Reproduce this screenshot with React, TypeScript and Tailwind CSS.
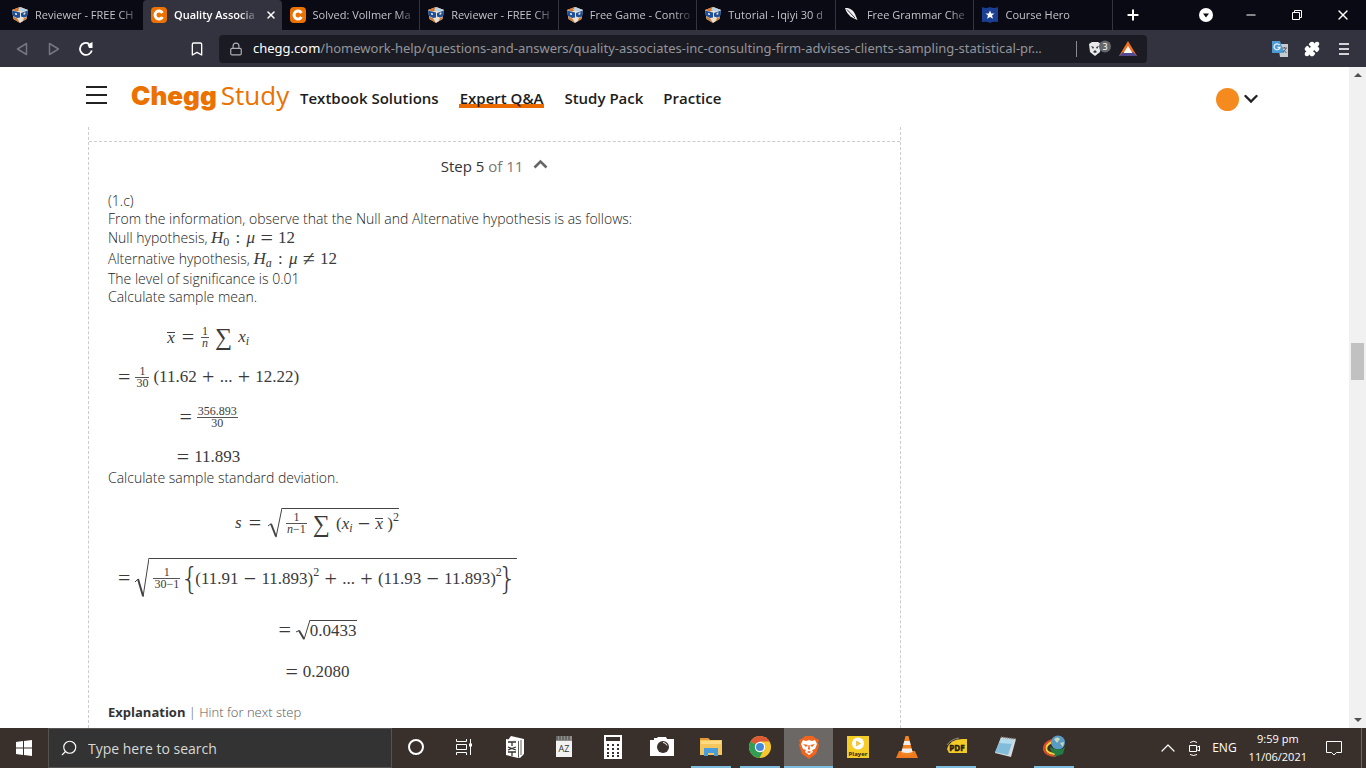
import type { ReactNode } from 'react';
import { Bookmark, ChevronUp, Lock, Minus, Plus, Puzzle, Search, X } from 'lucide-react';
import { clsx } from 'clsx';

interface TabInfo {
  title: string;
  icon: 'cube' | 'chegg' | 'feather' | 'hero';
  active?: boolean;
}

const TABS: TabInfo[] = [
  { title: 'Reviewer - FREE CH', icon: 'cube' },
  { title: 'Quality Associa', icon: 'chegg', active: true },
  { title: 'Solved: Vollmer Ma', icon: 'chegg' },
  { title: 'Reviewer - FREE CH', icon: 'cube' },
  { title: 'Free Game - Contro', icon: 'cube' },
  { title: 'Tutorial - Iqiyi 30 d', icon: 'cube' },
  { title: 'Free Grammar Che', icon: 'feather' },
  { title: 'Course Hero', icon: 'hero' },
];

const NAV_LINKS = ['Textbook Solutions', 'Expert Q&A', 'Study Pack', 'Practice'];

/* ---------- Tab icons ---------- */

const CubeIcon = () => (
  <svg viewBox="0 0 16 16" className="size-4">
    <path d="M0 3 8 0l8 3-1.500 9L8 16l-6.500-4z" fill="#e8e2d6" />
    <path d="M0 3 8 0l4 1.500L5 4.500z" fill="#d9772b" />
    <path d="M8 0l8 3-5 1.500-5-1.500z" fill="#b9d3e6" />
    <path d="M0 3.500l8 2v5l-3 .5-4-2z" fill="#1d4f9c" />
    <path d="M3 6l2 .5v1.500l-2-.5z" fill="#f3f3f3" />
    <path d="M9 6 16 3.500l-1 6-3 1-3-1z" fill="#20509a" />
    <path d="M11.500 6l2-.7-.3 2-1.500.7z" fill="#f4ead9" />
    <path d="M1.200 9.500l4 2L8 16l-6.500-4zM12 11l3-1-.5 2-4 2.500z" fill="#cf7a2e" />
  </svg>
);

const CheggIcon = () => (
  <span className="flex size-4 items-center justify-center rounded-sm bg-[#eb7100]">
    <svg viewBox="0 0 16 16" className="size-4" fill="none" stroke="#fff" strokeWidth="3">
      <path d="M11.500 6A4 4 0 1 0 11.500 10" />
    </svg>
  </span>
);

const FeatherIcon = () => (
  <svg viewBox="0 0 16 16" className="size-4">
    <path d="M1 1c5-.5 8 2 10 6l2.500 6L9 11C5 9 2 5 1 1z" fill="#f1f1f1" />
    <path d="M3 2.500l8 8.500" stroke="#0b0b16" strokeWidth=".8" fill="none" />
  </svg>
);

const HeroIcon = () => (
  <svg viewBox="0 0 16 16" className="size-4">
    <path d="M0 0q4 2 8 0 4 2 8 0v15q-5-1-8 1-3-2-8-1z" fill="#1b3f92" />
    <path d="M8 3.500l1.300 3h3.200L10 8.600l1 3.200-3-1.900-3 1.900 1-3.200-2.500-2.100h3.200z" fill="#fff" />
  </svg>
);

const TAB_ICONS: Record<TabInfo['icon'], () => ReactNode> = {
  cube: CubeIcon,
  chegg: CheggIcon,
  feather: FeatherIcon,
  hero: HeroIcon,
};

const Tab = ({ title, icon, active }: TabInfo) => {
  const Icon = TAB_ICONS[icon];
  return (
    <div
      className={clsx(
        'flex h-full min-w-0 flex-1 items-center gap-[7px] border-r pl-2 first:w-[143px] first:flex-none first:border-r-0 first:pl-3',
        active ? 'rounded-t border-[#32333f] bg-[#32333f] font-semibold text-white' : 'border-[#34343c] text-[#c3c3c9]'
      )}
    >
      <span className="shrink-0">
        <Icon />
      </span>
      <span className="min-w-0 flex-1 whitespace-nowrap [mask-image:linear-gradient(to_right,black_78%,transparent)]">
        {title}
      </span>
      {active && (
        <button type="button" aria-label="Close tab" className="mr-1">
          <X className="size-3" strokeWidth={3} />
        </button>
      )}
    </div>
  );
};

const TabStrip = () => (
  <div className="flex h-[30px] shrink-0 items-center bg-[#0a0a15] text-[11px] text-white">
    <div className="flex h-full min-w-0 max-w-[1113px] flex-1">
      {TABS.map((tab, i) => (
        <Tab key={i} {...tab} />
      ))}
    </div>
    <button type="button" aria-label="New tab" className="ml-3">
      <Plus className="size-4" strokeWidth={3} />
    </button>
    <div className="ml-auto flex items-center">
      <button type="button" aria-label="Search tabs" className="w-11">
        <svg viewBox="0 0 14 14" className="mx-auto size-3.5">
          <circle cx="7" cy="7" r="7" fill="#fff" />
          <path d="M4 5.500h6L7 9.500z" fill="#0a0a15" />
        </svg>
      </button>
      <button type="button" aria-label="Minimize" className="w-[46px]">
        <Minus className="mx-auto size-3.5" strokeWidth={2} />
      </button>
      <button type="button" aria-label="Restore" className="w-[46px]">
        <svg viewBox="0 0 12 12" className="mx-auto size-3" fill="none" stroke="#fff">
          <path d="M1.500 3.500h7v7h-7zM3.500 3V1.500h7v7H9" />
        </svg>
      </button>
      <button type="button" aria-label="Close" className="w-[46px]">
        <X className="mx-auto size-4" strokeWidth={2} />
      </button>
    </div>
  </div>
);

const Toolbar = () => (
  <div className="flex h-[37px] shrink-0 items-center bg-[#32333f] text-white">
    <div className="flex w-[219px] shrink-0 items-center pl-4">
      <button type="button" aria-label="Back">
        <svg viewBox="0 0 12 14" className="h-3.5 w-3" fill="none" stroke="#74757f" strokeWidth="1.500">
          <path d="M10.500 1.500v11L1.500 7z" strokeLinejoin="round" />
        </svg>
      </button>
      <button type="button" aria-label="Forward" className="ml-5">
        <svg viewBox="0 0 12 14" className="h-3.5 w-3" fill="none" stroke="#74757f" strokeWidth="1.500">
          <path d="M1.500 1.500v11l9-5.500z" strokeLinejoin="round" />
        </svg>
      </button>
      <button type="button" aria-label="Reload" className="ml-[18px]">
        <svg viewBox="0 0 16 16" className="size-4" fill="none" stroke="#fff" strokeWidth="1.800">
          <path d="M11 2.700A6 6 0 1 0 13.800 9.500" />
          <path d="M9.500 3.500l5-2.500v6h-3.500z" fill="#fff" stroke="none" />
        </svg>
      </button>
      <button type="button" aria-label="Bookmark" className="ml-[95px]">
        <Bookmark className="size-4" strokeWidth={2} />
      </button>
    </div>
    <div className="flex h-7 max-w-[928px] min-w-0 flex-1 items-center rounded bg-[#1b1c23] px-2.5 font-['Noto_Sans',sans-serif] text-[13px]">
      <Lock className="mr-2.5 size-3.5 shrink-0 text-[#b0b0b5]" strokeWidth={2} />
      <label htmlFor="address" className="shrink-0">chegg.com</label>
      <input
        id="address"
        readOnly
        className="min-w-0 flex-1 bg-transparent text-[#94959b] outline-none"
        value="/homework-help/questions-and-answers/quality-associates-inc-consulting-firm-advises-clients-sampling-statistical-pr..."
      />
      <span className="mx-2.5 h-4 w-px bg-[#8a8a90]" />
      <button type="button" aria-label="Brave Shields" className="w-6">
        <svg viewBox="0 0 24 18" className="h-[18px] w-6">
          <path d="M2 4l3-2h6l3 2-1 8-5 4-5-4z" fill="#e9e9ea" />
          <path d="M4 6l3 1-1 2zM12 6L9 7l1 2zM6 12l2-2 2 2-2 1z" fill="#33343c" />
          <circle cx="18" cy="6.500" r="6" fill="#65666c" />
          <text x="18" y="10" textAnchor="middle" fontSize="9" fill="#fff">3</text>
        </svg>
      </button>
      <button type="button" aria-label="Brave Rewards" className="ml-2">
        <svg viewBox="0 0 18 16" className="h-4 w-[18px]">
          <path d="M9 0l9 15H0z" fill="#f0701d" />
          <path d="M0 15l4-4h10l4 4z" fill="#514a90" />
          <path d="M9 5l4.500 7h-9z" fill="#fff" />
        </svg>
      </button>
    </div>
    <div className="ml-auto flex shrink-0 items-center gap-4 pr-3.5">
      <button type="button" aria-label="Translate">
        <svg viewBox="0 0 16 16" className="size-4">
          <path d="M6 3h10v13H8z" fill="#c7cacf" />
          <path d="M0 0h8l4 12H0z" fill="#4c9bd3" />
          <path d="M7.500 4A3 3 0 1 0 8 6.500H5.500" fill="none" stroke="#e6f1fa" strokeWidth="1.300" />
          <path d="M10 7h5M12.500 6v1M14 7q-1 3-3 4M11.500 9l3 3" fill="none" stroke="#5c6270" />
        </svg>
      </button>
      <button type="button" aria-label="Extensions">
        <Puzzle className="size-4" fill="currentColor" />
      </button>
      <button type="button" aria-label="Browser menu" className="flex w-4 flex-col items-center gap-[3px]">
        <span className="h-0.5 w-2.5 bg-[#d4d4d8]" />
        <span className="h-0.5 w-2.5 bg-[#d4d4d8]" />
        <span className="h-0.5 w-2.5 bg-[#d4d4d8]" />
      </button>
    </div>
  </div>
);

/* ---------- Site header ---------- */

const SiteHeader = () => (
  <header className="flex h-[60px] shrink-0 items-center pr-[91px] pl-[86px]">
    <button type="button" aria-label="Menu" className="mb-1 flex w-[21px] flex-col gap-[6px]">
      <span className="h-0.5 bg-[#222]" />
      <span className="h-0.5 bg-[#222]" />
      <span className="h-0.5 bg-[#222]" />
    </button>
    <a href="#" className="mb-1 ml-6 flex w-[157px] items-baseline gap-1 text-[#eb7100]">
      <span className="font-['Inter'] text-[26px] leading-8 font-black">Chegg</span>
      <span className="font-['Open_Sans'] text-[26px] leading-8">Study</span>
    </a>
    <nav className="ml-3 flex gap-5 pt-0.5 text-[15px] leading-5 font-semibold text-[#1c1c1c]">
      {NAV_LINKS.map((link) => (
        <a
          key={link}
          href="#"
          className={clsx(
            link === 'Expert Q&A' && 'bg-linear-to-t from-[#eb6a00] from-20% to-transparent to-20% px-px'
          )}
        >
          {link}
        </a>
      ))}
    </nav>
    <button type="button" aria-label="Account" className="ml-auto flex items-center gap-[5px] pt-1">
      <span className="size-[23px] rounded-full bg-[#f58a1f]" />
      <svg viewBox="0 0 14 10" className="h-2.5 w-3.5" fill="none" stroke="#222" strokeWidth="2.400">
        <path d="M1.500 2L7 7.500 12.500 2" strokeLinecap="round" />
      </svg>
    </button>
  </header>
);

/* ---------- Math ---------- */

const Op = ({ children }: { children: ReactNode }) => (
  <span className="px-px align-[-2px] text-[22px] leading-[14px]">{children}</span>
);

const Frac = ({ top, bottom }: { top: ReactNode; bottom: ReactNode }) => (
  <span className="inline-flex flex-col items-center text-xs leading-[11px]">
    <span className="px-px">{top}</span>
    <span className="h-px w-full bg-[#555]" />
    <span className="px-px">{bottom}</span>
  </span>
);

const XBar = () => (
  <span className="inline-block border-t border-[#444] leading-[10px] italic">x</span>
);

const Root = ({ children }: { children: ReactNode }) => (
  <span className="flex h-full">
    <svg viewBox="0 0 14 40" preserveAspectRatio="none" className="h-full w-3.5 shrink-0" fill="none" stroke="#444">
      <path d="M0 24l3-3" vectorEffect="non-scaling-stroke" />
      <path d="M3 21l5 17" strokeWidth="2" vectorEffect="non-scaling-stroke" />
      <path d="M8 39L14 0" vectorEffect="non-scaling-stroke" />
    </svg>
    <span className="flex items-center border-t border-[#444]">{children}</span>
  </span>
);

const Sup = () => <sup className="-top-2 text-xs leading-none">2</sup>;

const Sub = ({ children }: { children: ReactNode }) => (
  <sub className="text-xs leading-none">{children}</sub>
);

const Brace = ({ children }: { children: ReactNode }) => (
  <span className="font-['DejaVu_Sans'] text-[30px] leading-8 font-extralight">{children}</span>
);

const MeanSteps = () => (
  <div className="mt-[19px] flex w-fit flex-col items-center gap-4 px-[9px] font-['Liberation_Serif',serif] text-[17px] leading-5 font-normal text-[#3a3a3a]">
    <div className="flex h-6 items-center gap-1.5">
      <XBar /> <Op>=</Op> <Frac top="1" bottom={<i>n</i>} />
      <span className="text-2xl">∑</span>
      <span><i>x</i><Sub><i>i</i></Sub></span>
    </div>
    <div className="flex h-6 items-center gap-1">
      <Op>=</Op> <Frac top="1" bottom="30" />
      <span>(11.62 <Op>+</Op> ... <Op>+</Op> 12.22)</span>
    </div>
    <div className="flex h-6 items-center gap-1">
      <Op>=</Op> <Frac top="356.893" bottom="30" />
    </div>
    <div className="flex h-6 items-center gap-1"><Op>=</Op> 11.893</div>
  </div>
);

const DeviationSteps = () => (
  <div className="mt-[21px] flex w-fit flex-col items-center gap-5 px-[9px] font-['Liberation_Serif',serif] text-[17px] leading-5 font-normal text-[#3a3a3a]">
    <div className="flex h-[30px] items-center gap-1.5">
      <i>s</i> <Op>=</Op>
      <Root>
        <span className="flex items-center gap-1.5 pl-1">
          <Frac top="1" bottom={<><i>n</i>−1</>} />
          <span className="text-2xl">∑</span>
          <span>(<i>x</i><Sub><i>i</i></Sub> <Op>−</Op> <XBar /> )<Sup /></span>
        </span>
      </Root>
    </div>
    <div className="flex h-10 items-center gap-1">
      <Op>=</Op>
      <Root>
        <span className="flex items-center pl-1">
          <Frac top="1" bottom="30−1" />
          <Brace>{'{'}</Brace>
          <span className="-mx-1">
            (11.91 <Op>−</Op> 11.893)<Sup /> <Op>+</Op> ... <Op>+</Op> (11.93 <Op>−</Op> 11.893)<Sup />
          </span>
          <Brace>{'}'}</Brace>
        </span>
      </Root>
    </div>
    <div className="flex h-6 items-center gap-1">
      <Op>=</Op>
      <span className="h-5"><Root>0.0433</Root></span>
    </div>
    <div className="flex h-5 items-center gap-1"><Op>=</Op> 0.2080</div>
  </div>
);

const Formula = ({ children }: { children: ReactNode }) => (
  <span className="font-['Liberation_Serif',serif] text-[17px] font-normal text-[#3a3a3a]">{children}</span>
);

const Solution = () => (
  <main className="ml-[88px] min-h-0 w-[813px] max-w-full flex-1 overflow-hidden border-x border-dashed border-[#ccc]">
    <button
      type="button"
      className="mt-3.5 flex w-full items-center justify-center gap-2.5 border-t border-dashed border-[#ccc] pt-3.5 text-[15px] leading-5 text-[#777]"
    >
      <span><span className="text-[#333]">Step 5</span> of 11</span>
      <svg viewBox="0 0 15 10" className="mb-1 h-2.5 w-[15px]" fill="none" stroke="#666" strokeWidth="2.600">
        <path d="M1.500 8.500l6-6 6 6" />
      </svg>
    </button>
    <div className="px-[19px] pt-4 font-['Open_Sans',sans-serif] text-sm leading-[18px] font-light text-[#222]">
      <p>(1.c)</p>
      <p>From the information, observe that the Null and Alternative hypothesis is as follows:</p>
      <p className="h-5 leading-5">
        Null hypothesis,{' '}
        <Formula><i>H</i><Sub>0</Sub> <span className="px-0.5">:</span> <i>μ</i> <Op>=</Op> 12</Formula>
      </p>
      <p className="h-[22px] leading-[22px]">
        Alternative hypothesis,{' '}
        <Formula><i>H</i><Sub><i>a</i></Sub> <span className="px-0.5">:</span> <i>μ</i> <Op>≠</Op> 12</Formula>
      </p>
      <p>The level of significance is 0.01</p>
      <p>Calculate sample mean.</p>
      <MeanSteps />
      <p>Calculate sample standard deviation.</p>
      <DeviationSteps />
      <p className="mt-[21px] text-[13px] text-[#555]">
        <span className="font-bold text-[#333]">Explanation</span> | Hint for next step
      </p>
    </div>
  </main>
);

const Scrollbar = () => (
  <div className="flex w-[17px] shrink-0 flex-col items-center bg-[#f1f1f1] py-1.5">
    <svg viewBox="0 0 8 4" className="h-1 w-2"><path d="M0 4l4-4 4 4z" fill="#505050" /></svg>
    <div className="flex w-full flex-1 flex-col items-center">
      <div className="flex-[266]" />
      <div className="h-[37px] w-[13px] bg-[#c1c1c1]" />
      <div className="flex-[338]" />
    </div>
    <svg viewBox="0 0 8 4" className="h-1 w-2"><path d="M0 0h8L4 4z" fill="#505050" /></svg>
  </div>
);

/* ---------- Taskbar ---------- */

interface TaskApp {
  name: string;
  running?: boolean;
  active?: boolean;
  icon: ReactNode;
}

const APPS: TaskApp[] = [
  {
    name: 'Cortana',
    icon: <circle cx="11" cy="12" r="7" fill="none" stroke="#fff" strokeWidth="2" />,
  },
  {
    name: 'Task View',
    icon: (
      <g fill="none" stroke="#fff">
        <path d="M2.500 4v2.500h10V4M2.500 20v-2.500h10V20M2.500 9.500h10v5h-10zM16.500 4v16" />
        <path d="M15 8.500h3v3h-3z" fill="#fff" stroke="none" />
      </g>
    ),
  },
  {
    name: 'Journal',
    icon: (
      <g>
        <path d="M5 5l3-4 13 3v15l-4 4-3-1V6z" fill="#fff" />
        <path d="M3 4l12 2v17L3 20z" fill="#fff" />
        <path d="M15.500 6v16M18 5v15" stroke="#3b332f" strokeWidth=".8" />
        <path d="M5 7h8M9 7v4M5 12l8 3M13 12l-8 3M5 17h8M9 17v4" stroke="#3b332f" strokeWidth="1.300" fill="none" />
      </g>
    ),
  },
  {
    name: 'Dictionary',
    icon: (
      <g>
        <path d="M4 1h16v6H4z" fill="#8e8e8c" />
        <path d="M5 1v4M8 1v4M11 1v4M14 1v4M17 1v4" stroke="#45403d" />
        <path d="M4 6h16v16H4z" fill="#f2f2f2" />
        <text x="12" y="17" textAnchor="middle" fontSize="9" fill="#333">AZ</text>
      </g>
    ),
  },
  {
    name: 'Calculator',
    icon: (
      <g>
        <path d="M3 0h18v24H3z" fill="#fff" />
        <path d="M5 2h14v4H5z" fill="#38312d" />
        <path d="M6 10h12M6 14h12M6 18h12M6 21h12" stroke="#38312d" strokeWidth="2" strokeDasharray="2 3" />
      </g>
    ),
  },
  {
    name: 'Camera',
    icon: (
      <g>
        <path d="M0 5h4V3h3l1-1h8l1 2h7v17H0z" fill="#fff" />
        <circle cx="13" cy="12" r="6" fill="#38312d" />
        <path d="M13 7.500a4.500 4.500 0 0 1 4 3" stroke="#fff" strokeWidth="1" fill="none" />
      </g>
    ),
  },
  {
    name: 'File Explorer',
    running: true,
    icon: (
      <g>
        <path d="M1 3h8l2 2h12v15H1z" fill="#f5c65b" />
        <path d="M1 3h8l1 2H1z" fill="#e59a36" />
        <path d="M2 6h20v3H2z" fill="#ffdb84" />
        <path d="M5 13h14v8h-4v-3H9v3H5z" fill="#4a9ddc" />
      </g>
    ),
  },
  {
    name: 'Chrome',
    running: true,
    icon: (
      <g>
        <circle cx="12" cy="12" r="11" fill="#f6c72f" />
        <path d="M12 12L2.500 6.500a11 11 0 0 1 19 0H12z" fill="#dd5937" />
        <path d="M2.500 6.500a11 11 0 0 0 9 16.500L16 14l-4-2z" fill="#2f9e52" />
        <circle cx="12" cy="12" r="5.200" fill="#fff" />
        <circle cx="12" cy="12" r="4" fill="#4688d8" />
      </g>
    ),
  },
  {
    name: 'Brave',
    running: true,
    active: true,
    icon: (
      <g>
        <path d="M8 1h8l2 2 4 2-1 3 1 2-3 9-7 5-7-5-3-9 1-2-1-3 4-2z" fill="#f1641e" />
        <path d="M6 5l3 1 3-1 3 1 3-1 2 4-2 5-3 1 1 2-4 3-4-3 1-2-3-1-2-5z" fill="#fff" />
        <path d="M6 9l5 1-2 2zM18 9l-5 1 2 2zM11.500 10h1l.5 4-1 1-1-1zM9.500 17l2.500-1 2.500 1-2.500 1z" fill="#f1641e" />
      </g>
    ),
  },
  {
    name: 'Player',
    icon: (
      <g>
        <path d="M1 1h22v22H1z" fill="#f4cd26" />
        <circle cx="12" cy="8.500" r="6" fill="#fff" />
        <path d="M10.500 6l4 2.500-4 2.500z" fill="#f4cd26" stroke="#d5a81b" strokeWidth=".5" />
        <text x="12" y="21" textAnchor="middle" fontSize="6" fontWeight="bold" fill="#33270c">Player</text>
      </g>
    ),
  },
  {
    name: 'VLC',
    icon: (
      <g>
        <path d="M4 16h16l3 7H1z" fill="#ee7a1d" />
        <path d="M10.500 1h3l4.500 18q-6 3-12 0z" fill="#f28422" />
        <path d="M9.300 6h5.400l1 4H8.200zM7.300 13.500h9.400l.9 3.500q-5.600 2-11.200 0z" fill="#eee" />
      </g>
    ),
  },
  {
    name: 'PDF',
    running: true,
    icon: (
      <g>
        <path d="M3 14Q6 4 18 4h5v14H5z" fill="#f2cb26" />
        <path d="M3 10q4-6 12-7" stroke="#8d8b80" fill="none" />
        <text x="13" y="16" textAnchor="middle" fontSize="8" fontWeight="bold" fill="#241c0d" stroke="#241c0d" strokeWidth=".5">PDF</text>
      </g>
    ),
  },
  {
    name: 'Notepad',
    icon: (
      <g>
        <path d="M8 2l15 2-5 18-16-4z" fill="#d4dadd" />
        <path d="M8 4l12 1-5 15L2 17z" fill="#83bcdb" />
        <path d="M8 4l12 1-1 4-13-1z" fill="#b3ddef" />
        <path d="M8 2l15 2" stroke="#777" strokeWidth="1.500" strokeDasharray="1 1" />
      </g>
    ),
  },
  {
    name: 'Download Manager',
    running: true,
    icon: (
      <g>
        <path d="M10 5Q1 8 2 15q2 6 12 6" fill="none" stroke="#e34a2d" strokeWidth="2" />
        <path d="M10 7Q3 10 4.500 15q2 4 10 4" fill="none" stroke="#f2d13b" strokeWidth="2" />
        <circle cx="16" cy="7.500" r="7" fill="#5a9bc6" />
        <path d="M12 4q4-3 6 0l-3 4zM18 8l4-1-1 5z" fill="#c6d9b8" />
        <path d="M8 12q0 5 5 7l-1 3 9-3 2-7-3 2q-7 1-12-2z" fill="#247a43" />
      </g>
    ),
  },
];

const Taskbar = () => (
  <footer className="flex h-10 shrink-0 items-center bg-[#3a302b] text-white">
    <button type="button" aria-label="Start" className="w-12 shrink-0">
      <svg viewBox="0 0 16 16" className="mx-auto size-4" fill="#fff">
        <path d="M0 2l7-1v6.500H0zM8 1l8-1v7.500H8zM0 8.500h7V15l-7-1zM8 8.500h8V16l-8-1z" />
      </svg>
    </button>
    <label htmlFor="search" className="flex h-full w-[344px] items-center gap-2.5 border border-[#565453] bg-[#333] pl-[11px]">
      <Search className="size-[18px] -scale-x-100" strokeWidth={1.5} />
      <input
        id="search"
        type="text"
        placeholder="Type here to search"
        className="min-w-0 flex-1 bg-transparent pt-0.5 text-sm outline-none placeholder:text-[#d8d8d6]"
      />
    </label>
    {APPS.map((app) => (
      <button
        key={app.name}
        type="button"
        aria-label={app.name}
        className="flex h-full w-[49px] shrink-0 flex-col items-center"
      >
        <span className={clsx('flex w-full flex-1 items-center justify-center', app.active && 'bg-[#6b6866]')}>
          <svg viewBox="0 0 24 24" className="size-6">{app.icon}</svg>
        </span>
        <span className={clsx('h-0.5', app.active ? 'w-full' : 'w-10', app.running && 'bg-[#7cbde0]')} />
      </button>
    ))}
    <div className="ml-auto flex h-full items-center text-[11px] leading-[18px]">
      <button type="button" aria-label="Show hidden icons">
        <ChevronUp className="size-6" strokeWidth={1.2} />
      </button>
      <button type="button" aria-label="Meet Now" className="ml-1.5">
        <svg viewBox="0 0 16 16" className="size-4" fill="none" stroke="#fff">
          <path d="M3.500 5.500h7v6h-7zM10.500 7.500l3-1.500v5l-3-1.500M4 2.500q4-2.500 7 0M4 14.500q4 2 7 0" />
        </svg>
      </button>
      <button type="button" className="ml-2.5 text-xs">ENG</button>
      <button type="button" className="ml-3 text-center">
        9:59 pm
        <br />
        11/06/2021
      </button>
      <button type="button" aria-label="Notifications" className="ml-[18px]">
        <svg viewBox="0 0 18 18" className="size-[18px]" fill="none" stroke="#fff">
          <path d="M1.500 2.500h15v11h-5L9 16l-2.500-2.500h-5z" />
        </svg>
      </button>
      <span className="ml-[18px] h-full w-[5px] border-l border-[#6c6561]" />
    </div>
  </footer>
);

const App = () => (
  <div className="flex h-screen flex-col overflow-hidden bg-white font-['Open_Sans',sans-serif]">
    <TabStrip />
    <Toolbar />
    <div className="flex min-h-0 flex-1">
      <div className="flex min-w-0 flex-1 flex-col">
        <SiteHeader />
        <Solution />
      </div>
      <Scrollbar />
    </div>
    <Taskbar />
  </div>
);

export default App;
